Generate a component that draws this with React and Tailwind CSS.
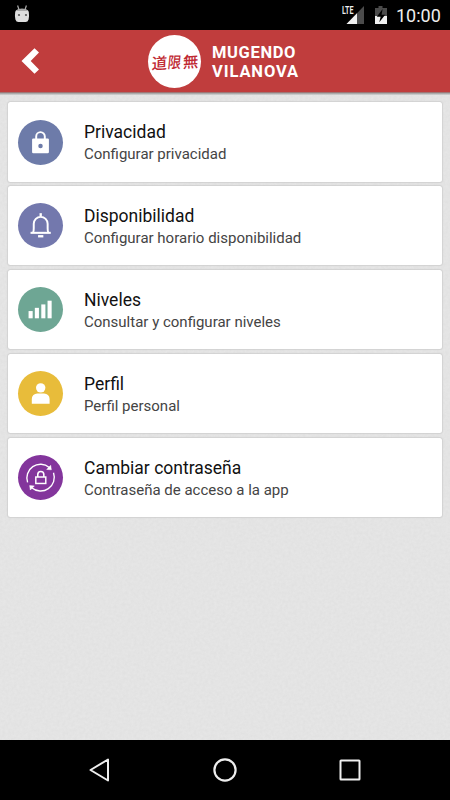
import React from "react";

const LockIcon = () => (
    <svg viewBox="0 0 46 46" className="size-[45px] shrink-0">
        <path d="M18.6 20v-3.2a4.4 4.4 0 0 1 8.8 0V20" fill="none" stroke="#fff" strokeWidth="2" />
        <rect x="14.4" y="18.9" width="17.2" height="15.2" rx="1.3" fill="#fff" />
        <circle cx="23" cy="26.5" r="2.3" fill="#6d7ba9" />
    </svg>
);

const BellIcon = () => (
    <svg viewBox="0 0 46 46" className="size-[45px] shrink-0" fill="none" stroke="#fff">
        <path d="M15.4 30.2c.7-1.2.7-2.5.7-4.5v-4.4a7.1 7.1 0 0 1 14.2 0v4.4c0 2 0 3.3.7 4.5" strokeWidth="2" />
        <path d="M12.800 30.500h20.700" strokeWidth="2.100" />
        <path d="M23.200 10.400v3.400" strokeWidth="2.400" />
        <path d="M20.500 34h5.400" strokeWidth="2.400" />
    </svg>
);

const LevelsIcon = () => (
    <svg viewBox="0 0 46 46" className="size-[45px] shrink-0" fill="#fff">
        <rect x="10.800" y="24.600" width="4.200" height="7.400" />
        <rect x="17.200" y="21.300" width="4.200" height="10.700" />
        <rect x="23.800" y="17.800" width="4.200" height="14.200" />
        <rect x="30.200" y="14" width="4.200" height="18" />
    </svg>
);

const PersonIcon = () => (
    <svg viewBox="0 0 46 46" className="size-[45px] shrink-0" fill="#fff">
        <circle cx="23.200" cy="17.200" r="4.800" />
        <path d="M14.100 33.600v-5a5.600 5.600 0 0 1 5.600-5.600h7a5.600 5.600 0 0 1 5.600 5.600v5z" />
    </svg>
);

const PasswordIcon = () => (
    <svg viewBox="0 0 46 46" className="size-[45px] shrink-0" fill="none" stroke="#fff">
        <path d="M9.800 28A14 14 0 0 1 32 12.700" strokeWidth="1.400" />
        <path d="M36.300 18.200A14 14 0 0 1 14 33.500" strokeWidth="1.400" />
        <path d="M33.400 10.600l.7 4.500-4.800-.3z" fill="#fff" strokeWidth=".5" />
        <path d="M12.600 35.800l-.7-4.500 4.800.3z" fill="#fff" strokeWidth=".5" />
        <rect x="18.200" y="22.500" width="10.200" height="6.600" strokeWidth="1.500" />
        <path d="M20.200 22.500v-2.600a3.100 3.100 0 0 1 6.200 0v2.600" strokeWidth="1.600" />
    </svg>
);

const items = [
    { title: "Privacidad", text: "Configurar privacidad", color: "bg-[#6d7ba9]", Icon: LockIcon },
    { title: "Disponibilidad", text: "Configurar horario disponibilidad", color: "bg-[#7378ad]", Icon: BellIcon },
    { title: "Niveles", text: "Consultar y configurar niveles", color: "bg-[#6ea694]", Icon: LevelsIcon },
    { title: "Perfil", text: "Perfil personal", color: "bg-[#e8bc3a]", Icon: PersonIcon },
    { title: "Cambiar contraseña", text: "Contraseña de acceso a la app", color: "bg-[#83359c]", Icon: PasswordIcon },
];

const StatusBar = () => (
    <div className="flex h-[30px] shrink-0 items-center bg-black pl-[14px] pr-[10px]">
        <svg viewBox="0 0 16 20" className="h-5 w-4">
            <path d="M3.600 .5l1.500 4.500M12.400 .5l-1.500 4.500" stroke="#aaa" strokeWidth="1.200" />
            <path d="M1.200 7Q1.500 4 8 4t6.800 3q.6 4-.2 7.500-.8 2.500-3 2.500H4.400q-2.200 0-3-2.500-.8-3.500-.2-7.500z" fill="#dedede" />
            <path d="M2 6Q4 3.600 8 3.600T14 6z" fill="#aaa" />
            <circle cx="5" cy="10" r="1.100" fill="#555" />
            <circle cx="12" cy="10" r="1.100" fill="#555" />
        </svg>
        <svg viewBox="0 0 24 20" className="ml-auto h-5 w-6">
            <path d="M23 1v18H5.500z" fill="#4b4b4b" />
            <path d="M16 8.300V19H5.500z" fill="#f0f0f0" />
            <path d="M0 0h12.500v9.500H0z" fill="#000" />
            <text x="1" y="8.800" textLength="11.500" lengthAdjust="spacingAndGlyphs" fill="#eee" fontSize="10.500" fontWeight="600" fontFamily="Roboto, sans-serif">LTE</text>
        </svg>
        <svg viewBox="0 0 14 20" className="ml-[9px] h-5 w-[14px]">
            <path d="M4.500 1h4v2H13v8H1V3h3.500z" fill="#4b4b4b" />
            <path d="M1 11h12v8H1z" fill="#f0f0f0" />
            <path d="M8.600 4L2.800 11.700h3.800L5.300 17.200l5.900-7.400H7.600z" fill="#000" />
        </svg>
        <span className="ml-[8px] w-[44px] whitespace-nowrap pt-px text-[18px] leading-[30px] text-[#eee]">10:00</span>
    </div>
);

const Header = () => (
    <header className="flex h-[62px] shrink-0 items-center bg-[#c03d3d] pl-[21px]">
        <svg viewBox="0 0 20 28" className="h-7 w-5">
            <path d="M13.500 1.200l4.500 4.400L9.700 14l8.300 8.400-4.500 4.400L.5 14z" fill="#fff" />
        </svg>
        <div className="ml-[107px] flex size-[53px] items-center justify-center rounded-full bg-white">
            <svg viewBox="0 0 53 53" className="size-[53px]" fill="#bf2a33" fontFamily="'Noto Sans CJK JP', sans-serif" fontWeight="500">
                <text transform="translate(3.500 34.500) rotate(-4) skewX(-6)" fontSize="15.500">道</text>
                <text transform="translate(19.300 33) skewX(-6) scale(.92 1.080)" fontSize="14.500">限</text>
                <text transform="translate(34.700 33) rotate(-4) skewX(-6)" fontSize="15.500">無</text>
            </svg>
        </div>
        <div className="ml-[11px] pt-[1px] text-[16.5px] font-bold leading-[19px] text-white">
            <div className="tracking-[.65px]">MUGENDO</div>
            <div className="tracking-[.9px]">VILANOVA</div>
        </div>
    </header>
);

const SettingsRow = ({ title, text, color, Icon }) => (
    <div className="flex h-[79.3px] shrink-0 items-center rounded-[2.5px] bg-white pl-[10px] shadow-[0_0_1px_1px_#d2d2d2]">
        <div className={`flex size-[45px] items-center justify-center rounded-full ${color}`}>
            <Icon />
        </div>
        <div className="ml-[21px] pt-[2.6px]">
            <div className="text-[17.5px] leading-[23px] text-[#111]">{title}</div>
            <div className="text-[15px] leading-[21px] text-[#444]">{text}</div>
        </div>
    </div>
);

const NavBar = () => (
    <nav className="flex h-[60px] shrink-0 items-center justify-center gap-[101px] bg-black">
        <svg viewBox="0 0 24 26" className="h-[26px] w-6" fill="none" stroke="#eee" strokeWidth="2" strokeLinejoin="round">
            <path d="M20 2.500v21L2.500 13z" />
        </svg>
        <svg viewBox="0 0 24 24" className="size-6" fill="none" stroke="#eee" strokeWidth="2.200">
            <circle cx="12" cy="12" r="10.600" />
        </svg>
        <svg viewBox="0 0 24 24" className="size-6" fill="none" stroke="#eee" strokeWidth="2">
            <rect x="2.500" y="2.500" width="19" height="19" rx=".5" />
        </svg>
    </nav>
);

// faint paper grain under the list
const PaperTexture = () => (
    <svg className="absolute inset-0 size-full opacity-[.07]" aria-hidden="true">
        <filter id="paper">
            <feTurbulence type="fractalNoise" baseFrequency=".35" numOctaves="3" />
            <feColorMatrix values="0 0 0 0 .4  0 0 0 0 .4  0 0 0 0 .4  1.800 0 0 0 -.4" />
        </filter>
        <rect width="100%" height="100%" filter="url(#paper)" />
    </svg>
);

const App = () => {
    return (
        <div className="flex h-[800px] w-[450px] flex-col overflow-hidden bg-[#e6e6e6] font-['Roboto',sans-serif]">
            <StatusBar />
            <Header />
            <div className="h-[3px] shrink-0 bg-linear-to-b from-[#965c5c] via-[#aaa] to-[#d8d8d8]" />
            <main className="relative grow">
                <PaperTexture />
                <div className="relative flex flex-col gap-[4.5px] px-[8px] pt-[7.4px]">
                    {items.map((item) => (
                        <SettingsRow key={item.title} {...item} />
                    ))}
                </div>
            </main>
            <NavBar />
        </div>
    );
};

export default App;
